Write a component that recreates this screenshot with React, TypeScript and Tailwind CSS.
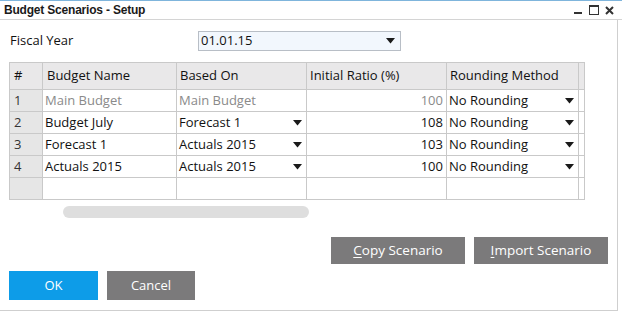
const rows = [
  { n: "1", name: "Main Budget", base: "Main Budget", ratio: "100", round: "No Rounding", locked: true },
  { n: "2", name: "Budget July", base: "Forecast 1", ratio: "108", round: "No Rounding" },
  { n: "3", name: "Forecast 1", base: "Actuals 2015", ratio: "103", round: "No Rounding" },
  { n: "4", name: "Actuals 2015", base: "Actuals 2015", ratio: "100", round: "No Rounding" },
];

function Arrow() {
  return (
    <svg width="9" height="6" viewBox="0 0 9 6" className="shrink-0">
      <path d="M0 0 H9 L4.5 5.5 Z" fill="#1a1a1a" />
    </svg>
  );
}

export default function App() {
  return (
    <div className="relative h-[314px] w-[622px] overflow-hidden bg-white text-[13px] text-[#111] [font-family:'Open_Sans',Arial,sans-serif]">
      <div className="flex h-[20px] items-center justify-between border-t border-[#7fb5dc] border-b border-b-[#d4d4d4] pl-[4px] pr-[8px]">
        <span className="text-[12px] font-bold tracking-[-0.2px] text-[#1a1a1a] [font-family:'Liberation_Sans',Arial,sans-serif]">
          Budget Scenarios - Setup
        </span>
        <div className="flex items-center gap-[6px]">
          <svg width="9" height="10" viewBox="0 0 9 10">
            <rect x="0" y="7" width="8" height="2" fill="#333" />
          </svg>
          <svg width="10" height="10" viewBox="0 0 10 10">
            <rect x="0.5" y="0.5" width="9" height="9" fill="none" stroke="#333" />
            <rect x="0.5" y="0.5" width="9" height="1.5" fill="#333" />
          </svg>
          <svg width="9" height="9" viewBox="0 0 9 9">
            <path d="M1 1 L8 8 M8 1 L1 8" stroke="#333" strokeWidth="2" />
          </svg>
        </div>
      </div>

      <div className="h-[291px] w-[618px] border-r border-b border-[#cfcfcf]">
        <div className="flex h-[40px] items-center pl-[10px] pt-[1px]">
          <span className="w-[188px]">Fiscal Year</span>
          <div className="flex h-[20px] w-[203px] items-center justify-between border border-[#b8bec6] bg-[#f2f7fd] pl-[2px] pr-[5px]">
            <span>01.01.15</span>
            <Arrow />
          </div>
        </div>

        <table className="ml-[9px] mt-[2px] table-fixed border-collapse">
          <colgroup>
            <col className="w-[33px]" />
            <col className="w-[134px]" />
            <col className="w-[130px]" />
            <col className="w-[140px]" />
            <col className="w-[132px]" />
            <col className="w-[6px]" />
          </colgroup>
          <thead>
            <tr className="h-[27px] bg-[#e9e8e9] text-left">
              <th className="border border-[#c9c9c9] pl-[4px] font-normal">#</th>
              <th className="border border-[#c9c9c9] pl-[4px] font-normal">Budget Name</th>
              <th className="border border-[#c9c9c9] pl-[3px] font-normal">Based On</th>
              <th className="border border-[#c9c9c9] pl-[3px] font-normal">Initial Ratio (%)</th>
              <th className="border border-[#c9c9c9] pl-[3px] font-normal">Rounding Method</th>
              <th className="border border-[#c9c9c9]" />
            </tr>
          </thead>
          <tbody>
            {rows.map((r) => (
              <tr key={r.n} className={`h-[22px] ${r.locked ? "text-[#8a8a8a]" : ""}`}>
                <td className="border border-[#c9c9c9] bg-[#e6e6e6] pl-[4px] text-[#333]">{r.n}</td>
                <td className="border border-[#c9c9c9] pl-[2px]">{r.name}</td>
                <td className="border border-[#c9c9c9] pl-[2px] pr-[4px]">
                  <div className="flex items-center justify-between">
                    <span>{r.base}</span>
                    {!r.locked && <Arrow />}
                  </div>
                </td>
                <td className="border border-[#c9c9c9] pr-[3px] text-right">{r.ratio}</td>
                <td className="border border-[#c9c9c9] pl-[2px] pr-[4px] text-[#111]">
                  <div className="flex items-center justify-between">
                    <span>{r.round}</span>
                    <Arrow />
                  </div>
                </td>
                <td className="border border-[#c9c9c9]" />
              </tr>
            ))}
            <tr className="h-[22px]">
              <td className="border border-[#c9c9c9] bg-[#e6e6e6]" />
              <td className="border border-[#c9c9c9]" />
              <td className="border border-[#c9c9c9]" />
              <td className="border border-[#c9c9c9]" />
              <td className="border border-[#c9c9c9]" />
              <td className="border border-[#c9c9c9]" />
            </tr>
          </tbody>
        </table>

        <div className="ml-[63px] mt-[6px] h-[12px] w-[246px] rounded-full bg-[#dedede]" />

        <div className="mt-[19px] flex justify-end gap-[9px] pr-[9px]">
          <button className="h-[27px] w-[134px] bg-[#7b7a7b] text-[13.5px] text-white">
            <span className="underline underline-offset-2">C</span>opy Scenario
          </button>
          <button className="h-[27px] w-[134px] bg-[#7b7a7b] text-[13.5px] text-white">
            <span className="underline underline-offset-2">I</span>mport Scenario
          </button>
        </div>

        <div className="mt-[7px] flex gap-[9px] pl-[9px]">
          <button className="h-[29px] w-[89px] bg-[#0d9ce8] text-[13px] text-white">OK</button>
          <button className="h-[29px] w-[88px] bg-[#7b7a7b] text-[13px] text-white">Cancel</button>
        </div>
      </div>
    </div>
  );
}
